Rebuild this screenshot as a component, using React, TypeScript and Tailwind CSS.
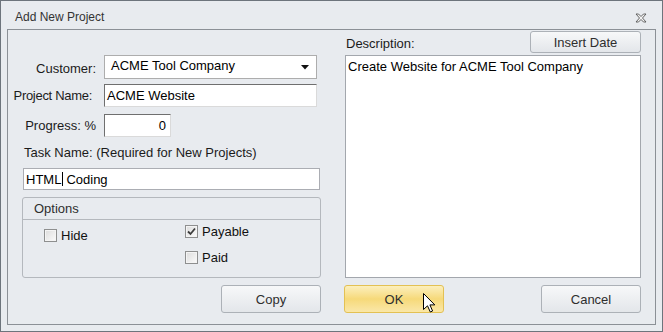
import React from "react";

function Btn({ children, size = "w-[100px] h-[28px]" }: { children: React.ReactNode; size?: string }) {
  return (
    <div
      className={`flex items-center justify-center ${size} rounded-[3px] border border-[#acb1b7] bg-gradient-to-b from-[#f7f8f9] to-[#e3e6ea] text-[13px] leading-[15px] text-[#2e2e2e]`}
    >
      {children}
    </div>
  );
}

function Check({ checked, label }: { checked?: boolean; label: string }) {
  return (
    <div className="flex items-center h-[13px]">
      <div className="relative w-[13px] h-[13px] border border-[#8e8f8f] bg-gradient-to-br from-[#dcdcdc] to-[#fbfbfb] shadow-[inset_0_0_0_1px_#f4f4f4]">
        {checked && (
          <svg className="absolute left-[1px] top-[1px]" width="9" height="9" viewBox="0 0 9 9">
            <path d="M1 4.5 L3.5 7 L8 1.5" fill="none" stroke="#3d3d3d" strokeWidth="1.8" />
          </svg>
        )}
      </div>
      <span className="ml-[4px] text-[13px] leading-[15px] text-[#111]">{label}</span>
    </div>
  );
}

export default function App() {
  return (
    <div className="w-[663px] h-[332px] border border-[#6d747c] bg-[#e8ebef] flex flex-col font-['Liberation_Sans',Arial,sans-serif] text-[#1b1b1b] select-none">
      {/* Title bar */}
      <div className="h-[28px] flex items-center pt-[4px] pl-[14px] pr-[15px] shrink-0">
        <span className="text-[12px] leading-[14px] text-[#333]">Add New Project</span>
        <div className="ml-auto mt-[1px]">
          <svg width="12" height="10" viewBox="0 0 12 10">
            <path
              d="M1 1 L3.5 1 L6 3.5 L8.5 1 L11 1 L7.5 5 L11 9 L8.5 9 L6 6.5 L3.5 9 L1 9 L4.5 5 Z"
              fill="#f3f3f3"
              stroke="#555"
              strokeWidth="0.9"
            />
          </svg>
        </div>
      </div>

      {/* Inner panel */}
      <div className="mx-[6px] mb-[6px] flex-1 border border-[#8b9096] flex">
        {/* Left column */}
        <div className="w-[313px] flex flex-col">
          <div className="mt-[25px] flex items-center h-[24px]">
            <div className="w-[88px] text-right text-[13px] leading-[15px] mt-[3px]">Customer:</div>
            <div className="ml-[8px] w-[213px] h-[24px] border border-[#adadad] bg-white flex items-center pl-[6px] pr-[7px]">
              <span className="text-[13px] leading-[15px] text-black mt-[-3px]">ACME Tool Company</span>
              <svg className="ml-auto" width="8" height="5" viewBox="0 0 8 5">
                <path d="M0 0 L8 0 L4 4.5 Z" fill="#111" />
              </svg>
            </div>
          </div>

          <div className="mt-[5px] flex items-center h-[23px]">
            <div className="w-[88px] pr-[4px] text-right text-[13px] leading-[15px] tracking-[-0.3px]">Project Name:</div>
            <div className="ml-[8px] w-[213px] h-[23px] border border-t-[#6f6f6f] border-l-[#6f6f6f] border-r-[#dadada] border-b-[#dadada] bg-white flex items-center pl-[2px]">
              <span className="text-[13px] leading-[15px] text-black">ACME Website</span>
            </div>
          </div>

          <div className="mt-[7px] flex items-center h-[23px]">
            <div className="w-[88px] text-right text-[13px] leading-[15px]">Progress: %</div>
            <div className="ml-[8px] w-[67px] h-[23px] border border-t-[#6f6f6f] border-l-[#6f6f6f] border-r-[#dadada] border-b-[#dadada] bg-white flex items-center justify-end pr-[4px]">
              <span className="text-[13px] leading-[15px] text-black">0</span>
            </div>
          </div>

          <div className="mt-[8px] pl-[16px] h-[16px] text-[13px] leading-[16px]">Task Name: (Required for New Projects)</div>

          <div className="mt-[7px] ml-[15px] w-[297px] h-[22px] border border-[#abadb3] bg-white flex items-center pl-[2px]">
            <span className="text-[13px] leading-[15px] text-black">HTML</span>
            <span className="w-[1px] h-[14px] bg-black ml-[1px] mr-[3px]" />
            <span className="text-[13px] leading-[15px] text-black">Coding</span>
          </div>

          <div className="mt-[7px] ml-[14px] w-[299px] h-[81px] border border-[#b4b8bd] rounded-[3px] flex flex-col">
            <div className="h-[22px] border-b border-[#b4b8bd] flex items-center pl-[11px]">
              <span className="text-[13px] leading-[15px] text-[#2e2e2e]">Options</span>
            </div>
            <div className="flex flex-1">
              <div className="pl-[21px] pt-[9px] w-[162px]">
                <Check label="Hide" />
              </div>
              <div className="pt-[5px] flex flex-col">
                <Check checked label="Payable" />
                <div className="mt-[13px]">
                  <Check label="Paid" />
                </div>
              </div>
            </div>
          </div>

          <div className="mt-[7px] self-end">
            <Btn>Copy</Btn>
          </div>
        </div>

        {/* Right column */}
        <div className="ml-[23px] w-[298px] flex flex-col">
          <div className="mt-[1px] h-[22px] flex items-center">
            <span className="ml-[2px] mt-[2px] text-[13px] leading-[15px]">Description:</span>
            <div className="ml-auto mr-[1px]">
              <Btn size="w-[111px] h-[22px]">Insert Date</Btn>
            </div>
          </div>
          <div className="mt-[2px] ml-[1px] w-[296px] h-[223px] border border-[#a3a7ad] bg-white px-[2px] pt-[3px]">
            <div className="text-[13px] leading-[15px] text-black">Create Website for ACME Tool Company</div>
          </div>
          <div className="mt-[7px] flex">
            <div className="relative">
              <div className="flex items-center justify-center w-[100px] h-[28px] rounded-[3px] border border-[#e3c154] bg-gradient-to-b from-[#fcefbc] via-[#f6d979] to-[#fae7a8] text-[13px] leading-[15px] text-[#2e2e2e]">
                OK
              </div>
              <svg className="absolute left-[79px] top-[8px]" width="13" height="20" viewBox="0 0 13 20">
                <path
                  d="M0.5 0.5 L0.5 16.5 L4.5 12.8 L7.3 19 L9.6 18 L6.9 11.9 L11.8 11.9 Z"
                  fill="#fff"
                  stroke="#000"
                  strokeWidth="1"
                  strokeLinejoin="miter"
                />
              </svg>
            </div>
            <div className="ml-auto mr-[1px]">
              <Btn>Cancel</Btn>
            </div>
          </div>
        </div>
      </div>
    </div>
  );
}
